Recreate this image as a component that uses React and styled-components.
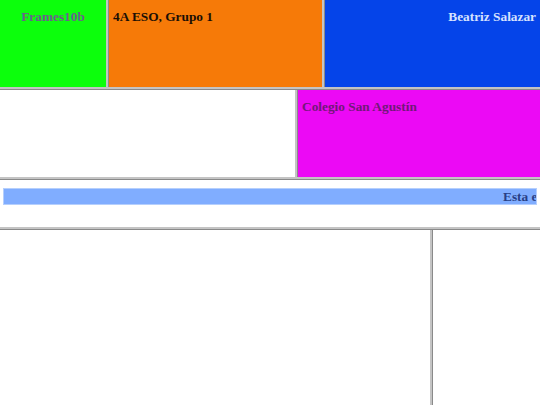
import React from 'react'
import styled, { createGlobalStyle } from 'styled-components'

const GlobalStyle = createGlobalStyle`
    html, body {
        margin: 0;
        padding: 0;
        background: #ffffff;
    }
    body {
        font-family: "Liberation Serif", "Times New Roman", serif;
    }
`

export default function App() {
    return (
        <>
            <GlobalStyle />
            <Frameset>
                <Row $height="87px">
                    <Frame $bg="#0cff0c" $width="106px">
                        <Titulo $color="#6b5f8c" $align="center">Frames10b</Titulo>
                    </Frame>
                    <VDivider />
                    <Frame $bg="#f67a08" $width="213px">
                        <Titulo $color="#1a0f05">4A ESO, Grupo 1</Titulo>
                    </Frame>
                    <VDivider />
                    <Frame $bg="#0544e9">
                        <Titulo $color="#d6e2ff" $align="right">Beatriz Salazar</Titulo>
                    </Frame>
                </Row>
                <HDivider />
                <Row $height="87px">
                    <Frame $bg="#ffffff" $width="295px" />
                    <VDivider />
                    <Frame $bg="#ec09f5">
                        <Titulo $color="#721878">Colegio San Agustín</Titulo>
                    </Frame>
                </Row>
                <HDivider />
                <Row $height="47px">
                    <Frame $bg="#ffffff">
                        <Marquesina>
                            <MarquesinaTexto>Esta es una página de prueba de marcos</MarquesinaTexto>
                        </Marquesina>
                    </Frame>
                </Row>
                <HDivider />
                <Row $grow>
                    <Frame $bg="#ffffff" $width="430px" />
                    <VDivider />
                    <Frame $bg="#ffffff" />
                </Row>
            </Frameset>
        </>
    )
}

const Frameset = styled.div`
    display: flex;
    flex-direction: column;
    width: 540px;
    height: 405px;
    overflow: hidden;
`

const Row = styled.div`
    display: flex;
    height: ${p => p.$height || 'auto'};
    flex: ${p => (p.$grow ? '1' : 'none')};
    min-height: 0;
`

const Frame = styled.div`
    background: ${p => p.$bg};
    width: ${p => p.$width || 'auto'};
    flex: ${p => (p.$width ? 'none' : '1')};
    padding: 8px 4px;
    box-sizing: border-box;
    overflow: hidden;
`

const VDivider = styled.div`
    width: 2px;
    flex: none;
    background: #c4c4c4;
    border-right: 1px solid #8a8a8a;
`

const HDivider = styled.div`
    height: 2px;
    flex: none;
    background: #c4c4c4;
    border-bottom: 1px solid #8a8a8a;
`

const Titulo = styled.h5`
    margin: 1px 0 0;
    font-size: 13.33px;
    font-weight: bold;
    line-height: 16px;
    color: ${p => p.$color};
    text-align: ${p => p.$align || 'left'};
`

const Marquesina = styled.div`
    margin: 0 -1px;
    height: 17px;
    background: #80adff;
    border: 1px solid #b5cffd;
    box-sizing: border-box;
    overflow: hidden;
    white-space: nowrap;
    display: flex;
    align-items: center;
`

const MarquesinaTexto = styled.span`
    display: inline-block;
    padding-left: 499px;
    font-size: 13.33px;
    font-weight: bold;
    line-height: 13px;
    color: #283f86;
`
